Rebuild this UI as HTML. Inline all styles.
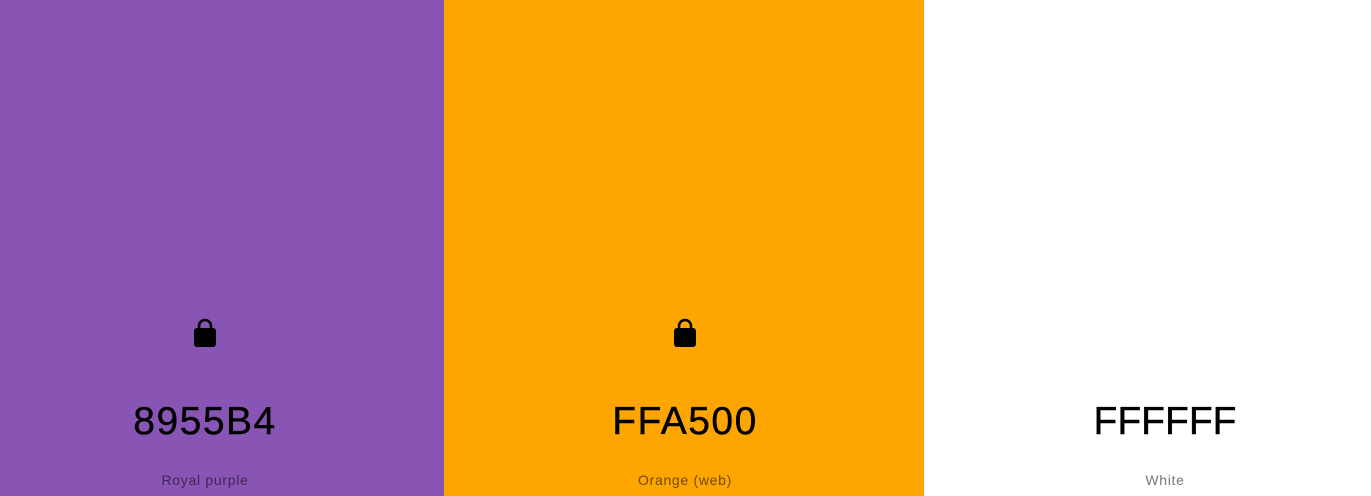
<!DOCTYPE html><html><head><style>
body{margin:0;width:1371px;height:496px;overflow:hidden;font-family:"Liberation Sans",sans-serif;position:relative}
.c{position:absolute;top:0;height:496px}
.h{position:absolute;top:397px;width:300px;margin-left:-150px;text-align:center;font-size:39px;letter-spacing:1.5px;color:#000;line-height:50px;-webkit-text-stroke:0.4px #000}
.l{position:absolute;top:471px;width:300px;margin-left:-150px;text-align:center;font-size:14px;letter-spacing:0.7px;line-height:18px}
svg{position:absolute;top:318px}
</style></head><body>
<div class="c" style="left:0;width:444px;background:#8955B4"></div>
<div class="c" style="left:444px;width:480px;background:#FFA500"></div>
<div class="c" style="left:924px;width:447px;background:#fff"></div>
<svg style="left:193px" width="24" height="30" viewBox="0 0 24 30"><path d="M6 11V8a6 6 0 0 1 12 0v3" fill="none" stroke="#000" stroke-width="2.6"/><rect x="1" y="10" width="22" height="19" rx="3" fill="#000"/></svg>
<svg style="left:673px" width="24" height="30" viewBox="0 0 24 30"><path d="M6 11V8a6 6 0 0 1 12 0v3" fill="none" stroke="#000" stroke-width="2.6"/><rect x="1" y="10" width="22" height="19" rx="3" fill="#000"/></svg>
<div class="h" style="left:205px">8955B4</div>
<div class="h" style="left:685px">FFA500</div>
<div class="h" style="left:1165px;letter-spacing:0">FFFFFF</div>
<div class="l" style="left:205px;color:#3d2652">Royal purple</div>
<div class="l" style="left:685px;color:#6e4a00">Orange (web)</div>
<div class="l" style="left:1165px;color:#777">White</div>
</body></html>
